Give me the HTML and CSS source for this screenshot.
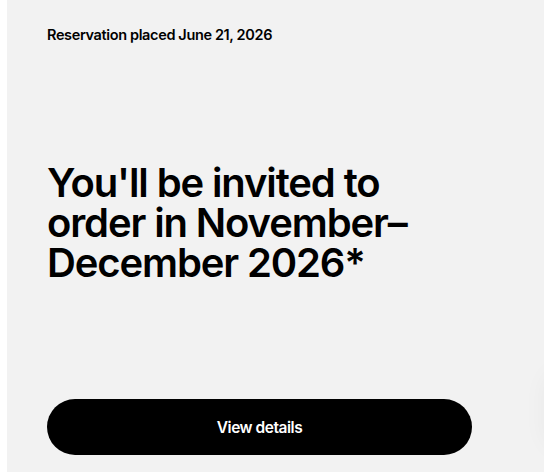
FILE: index.html
```html
<!DOCTYPE html>
<html lang="en">

<head>
    <meta charset="UTF-8">
    <meta name="viewport" content="width=device-width, initial-scale=1.0">
    <title>Reservation</title>
    <link rel="stylesheet" href="styles.css">
</head>

<body>

    <!-- Reservation Panel -->
    <div class="panel">
        <p class="placed">Reservation placed June 21, 2026</p>

        <h1 class="headline">You'll be invited to order in November–December 2026*</h1>

        <button class="details-btn">View details</button>

        <!-- faint edge of the next card -->
        <div class="edge-shadow"></div>
    </div>

</body>

</html>
```
FILE: styles.css
```css
/* General Reset */
* {
    margin: 0;
    padding: 0;
    box-sizing: border-box;
}

body {
    font-family: Inter, "Noto Sans", sans-serif;
    background-color: #ffffff;
    color: #000;
    overflow: hidden;
}

/* Panel */
.panel {
    position: relative;
    margin-left: 7px;
    height: 472px;
    background-color: #f2f2f2;
    padding: 26px 40px 0 40px;
    display: flex;
    flex-direction: column;
    overflow: hidden;
}

.placed {
    font-size: 14.5px;
    font-weight: 600;
    letter-spacing: -0.025em;
    line-height: 18px;
}

.headline {
    margin-top: 119px;
    font-size: 40px;
    font-weight: 600;
    line-height: 40px;
    letter-spacing: -0.028em;
    width: 390px;
}

/* Button */
.details-btn {
    margin-top: 116px;
    width: 425px;
    height: 56px;
    border: none;
    border-radius: 28px;
    background-color: #000;
    color: #fff;
    font-family: inherit;
    font-size: 15.5px;
    font-weight: 600;
    letter-spacing: -0.03em;
    cursor: pointer;
}

.edge-shadow {
    position: absolute;
    right: -40px;
    top: 370px;
    width: 40px;
    height: 80px;
    border-radius: 20px;
    box-shadow: 0 0 24px rgba(0, 0, 0, 0.04);
}
```
